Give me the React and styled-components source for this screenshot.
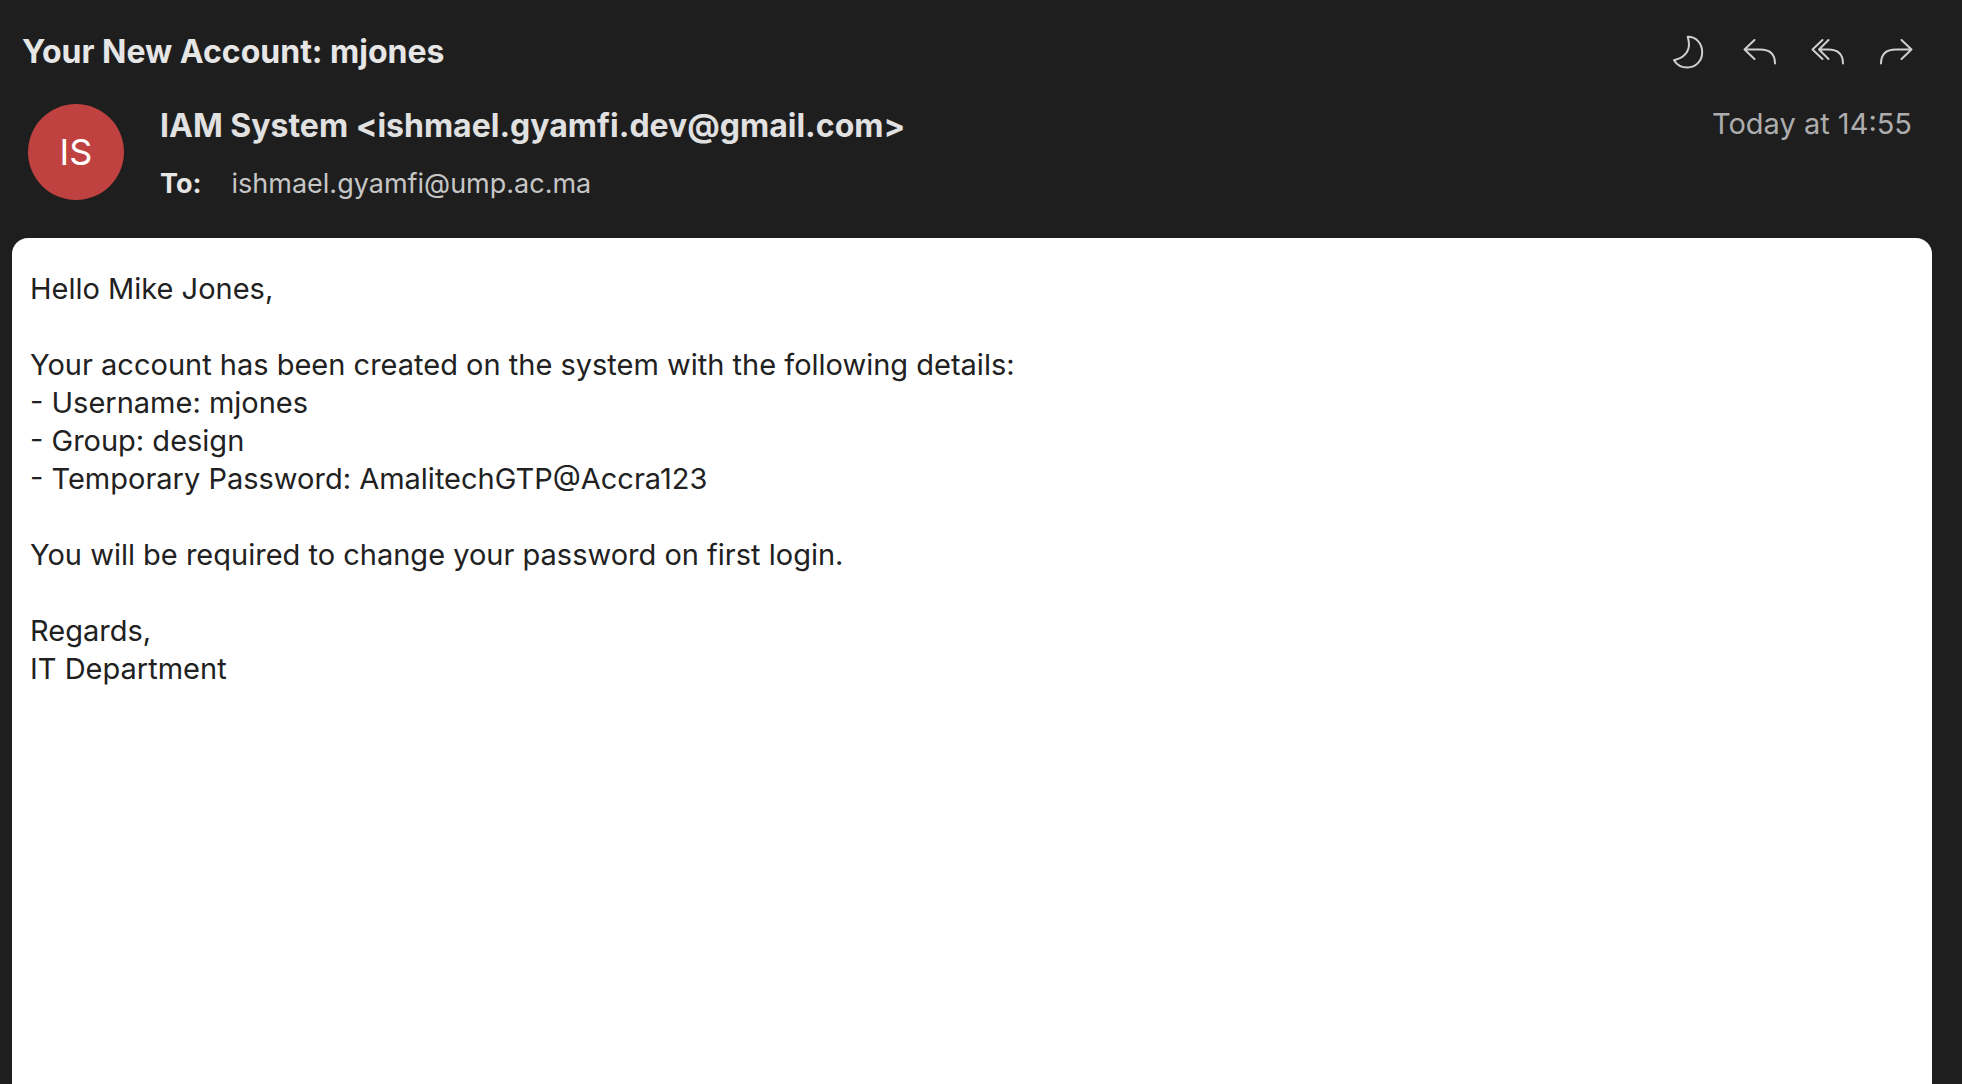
import React from "react";
import styled, { createGlobalStyle } from "styled-components";

const GlobalStyle = createGlobalStyle`
  *, *::before, *::after { box-sizing: border-box; }
  body {
    margin: 0;
    background: #1e1e1e;
    font-family: Inter, "Liberation Sans", sans-serif;
  }
`;

const Page = styled.main`
  display: flex;
  flex-direction: column;
  min-height: 100vh;
  padding: 32px 30px 0 12px;
`;

const Header = styled.header`
  display: flex;
  flex-direction: column;
  gap: 32px;
  padding: 0 16px 36px 10px;
`;

const TitleRow = styled.div`
  display: flex;
  align-items: center;
  justify-content: space-between;
  height: 40px;
`;

const Subject = styled.h1`
  margin: 0;
  color: #e6e6e6;
  font-size: 32px;
  line-height: 40px;
  font-weight: 700;
`;

const Actions = styled.div`
  display: flex;
  gap: 28px;
`;

const IconButton = styled.button`
  display: flex;
  width: 40px;
  height: 40px;
  padding: 0;
  border: 0;
  background: none;
  color: #cfcfcf;
  cursor: pointer;
`;

const Icon = styled.svg`
  width: 40px;
  height: 40px;
  fill: none;
  stroke: currentColor;
  stroke-width: 2;
  stroke-linecap: round;
  stroke-linejoin: round;
`;

const SenderRow = styled.div`
  display: flex;
  align-items: flex-start;
  padding-right: 4px;
`;

const Avatar = styled.div`
  display: grid;
  place-items: center;
  flex: none;
  width: 96px;
  height: 96px;
  margin: 0 36px 0 6px;
  border-radius: 50%;
  background: #c04240;
  color: #fff;
  font-size: 36px;
`;

const Addresses = styled.div`
  display: flex;
  flex: 1;
  flex-direction: column;
  gap: 20px;
  padding-top: 2px;
`;

const Sender = styled.div`
  color: #e1e1e1;
  font-size: 32px;
  line-height: 40px;
  font-weight: 700;
`;

const Recipient = styled.div`
  display: flex;
  gap: 30px;
  color: #c6c6c6;
  font-size: 27px;
  line-height: 36px;
`;

const Label = styled.span`
  color: #e6e6e6;
  font-weight: 700;
`;

const Received = styled.time`
  color: #adadad;
  font-size: 29px;
  line-height: 40px;
`;

const Message = styled.article`
  flex: 1;
  padding: 32px 18px;
  border-radius: 16px 16px 0 0;
  background: #fff;
  color: #212121;
  font-size: 29px;
  line-height: 38px;
`;

const Paragraph = styled.p`
  margin: 0 0 38px;
`;

const Line = styled.span`
  display: block;
`;

const ICONS = {
  snooze: "M15.7 4.8C24 4.5 30.2 11.5 30.2 20.2C30.2 29 23.6 35.5 15.6 35.5C9.6 35.5 4.7 32.7 2 28.2C11 26 16.5 20.5 17 13C17.1 10 16.5 7.5 15.7 4.8Z",
  reply: "M14.5 8 4.5 17.5 14.5 27M4.5 17.5H20Q35 17.5 35 31.5",
  replyAll: "M14.5 8 4.5 17.5 14.5 27M20.5 8 11 17.5 20.5 27M11 17.5H20Q35 17.5 35 31.5",
  forward: "M25.5 8 35.5 17.5 25.5 27M35.5 17.5H20Q5 17.5 5 31.5",
};

function Action({ label, icon }) {
  return (
    <IconButton type="button" aria-label={label}>
      <Icon viewBox="0 0 40 40" aria-hidden="true">
        <path d={ICONS[icon]} />
      </Icon>
    </IconButton>
  );
}

export default function App() {
  return (
    <>
      <GlobalStyle />
      <Page>
        <Header>
          <TitleRow>
            <Subject>Your New Account: mjones</Subject>
            <Actions>
              <Action label="Snooze" icon="snooze" />
              <Action label="Reply" icon="reply" />
              <Action label="Reply all" icon="replyAll" />
              <Action label="Forward" icon="forward" />
            </Actions>
          </TitleRow>
          <SenderRow>
            <Avatar aria-hidden="true">IS</Avatar>
            <Addresses>
              <Sender>IAM System &lt;ishmael.gyamfi.dev@gmail.com&gt;</Sender>
              <Recipient>
                <Label>To:</Label>
                <span>ishmael.gyamfi@ump.ac.ma</span>
              </Recipient>
            </Addresses>
            <Received>Today at 14:55</Received>
          </SenderRow>
        </Header>
        <Message>
          <Paragraph>Hello Mike Jones,</Paragraph>
          <Paragraph>
            <Line>Your account has been created on the system with the following details:</Line>
            <Line>- Username: mjones</Line>
            <Line>- Group: design</Line>
            <Line>- Temporary Password: AmalitechGTP@Accra123</Line>
          </Paragraph>
          <Paragraph>You will be required to change your password on first login.</Paragraph>
          <Paragraph>
            <Line>Regards,</Line>
            <Line>IT Department</Line>
          </Paragraph>
        </Message>
      </Page>
    </>
  );
}
